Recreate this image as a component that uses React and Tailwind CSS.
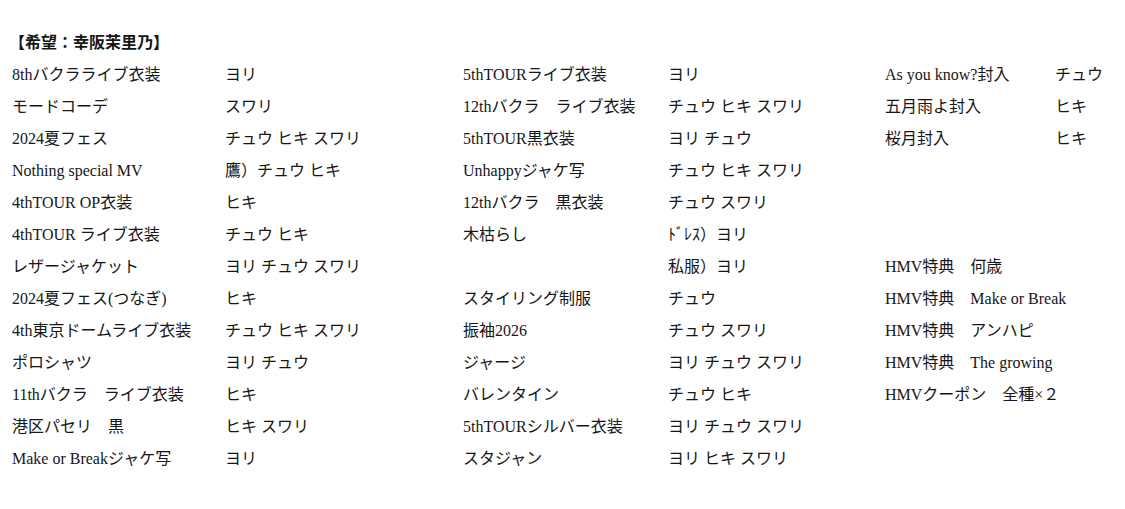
import React from "react";

const col1 = [
  ["8thバクラライブ衣装", "ヨリ"],
  ["モードコーデ", "スワリ"],
  ["2024夏フェス", "チュウ ヒキ スワリ"],
  ["Nothing special MV", "鷹）チュウ ヒキ"],
  ["4thTOUR OP衣装", "ヒキ"],
  ["4thTOUR ライブ衣装", "チュウ ヒキ"],
  ["レザージャケット", "ヨリ チュウ スワリ"],
  ["2024夏フェス(つなぎ)", "ヒキ"],
  ["4th東京ドームライブ衣装", "チュウ ヒキ スワリ"],
  ["ポロシャツ", "ヨリ チュウ"],
  ["11thバクラ　ライブ衣装", "ヒキ"],
  ["港区パセリ　黒", "ヒキ スワリ"],
  ["Make or Breakジャケ写", "ヨリ"],
];

const col2 = [
  ["5thTOURライブ衣装", "ヨリ"],
  ["12thバクラ　ライブ衣装", "チュウ ヒキ スワリ"],
  ["5thTOUR黒衣装", "ヨリ チュウ"],
  ["Unhappyジャケ写", "チュウ ヒキ スワリ"],
  ["12thバクラ　黒衣装", "チュウ スワリ"],
  ["木枯らし", "ﾄﾞﾚｽ）ヨリ"],
  ["", "私服）ヨリ"],
  ["スタイリング制服", "チュウ"],
  ["振袖2026", "チュウ スワリ"],
  ["ジャージ", "ヨリ チュウ スワリ"],
  ["バレンタイン", "チュウ ヒキ"],
  ["5thTOURシルバー衣装", "ヨリ チュウ スワリ"],
  ["スタジャン", "ヨリ ヒキ スワリ"],
];

const col3 = [
  ["As you know?封入", "チュウ"],
  ["五月雨よ封入", "ヒキ"],
  ["桜月封入", "ヒキ"],
  ["", ""],
  ["", ""],
  ["", ""],
  ["HMV特典　何歳", ""],
  ["HMV特典　Make or Break", ""],
  ["HMV特典　アンハピ", ""],
  ["HMV特典　The growing", ""],
  ["HMVクーポン　全種×２", ""],
];

function Column({ rows, width, labelWidth }) {
  return (
    <div className="flex flex-col shrink-0" style={{ width }}>
      {rows.map(([label, value], i) => (
        <div key={i} className="flex h-[32px] items-center whitespace-nowrap">
          <div className="shrink-0" style={{ width: labelWidth }}>
            {label}
          </div>
          <div>{value}</div>
        </div>
      ))}
    </div>
  );
}

export default function App() {
  return (
    <div
      className="w-[1125px] h-[509px] bg-white text-[#161616] text-[16px] overflow-hidden pt-[27px] pl-[12px]"
      style={{ fontFamily: '"Liberation Serif", "Noto Sans CJK JP", serif' }}
    >
      <div className="h-[32px] flex items-center font-bold -ml-[3px]">【希望：幸阪茉里乃】</div>
      <div className="flex">
        <Column rows={col1} width={451} labelWidth={213} />
        <Column rows={col2} width={422} labelWidth={205} />
        <Column rows={col3} width={240} labelWidth={170} />
      </div>
    </div>
  );
}
